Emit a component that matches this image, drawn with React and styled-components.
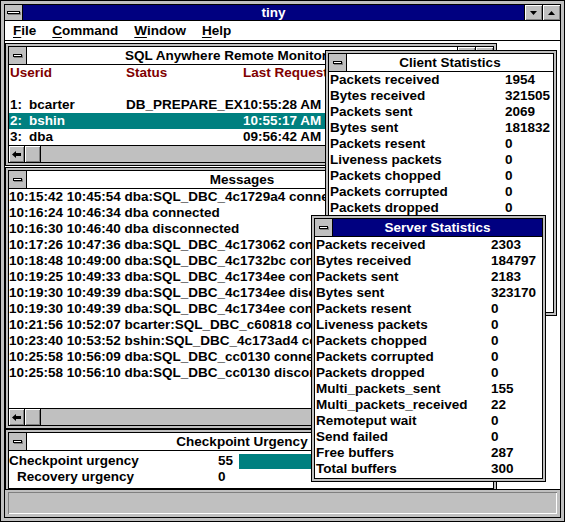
import React from 'react';
import styled, { createGlobalStyle } from 'styled-components';

const GlobalStyle = createGlobalStyle`
  html, body {
    margin: 0;
    padding: 0;
    background: #fff;
  }
  body {
    font-family: "Liberation Sans", Arial, sans-serif;
    font-weight: bold;
    font-size: 13.5px;
    color: #000;
  }
`;

const Frame = styled.div`
    width: 565px;
    height: 522px;
    box-sizing: border-box;
    border: 1px solid #000;
    background: #c0c0c0;
    padding: 3px;
`;
const Inner = styled.div`
    height: 100%;
    box-sizing: border-box;
    border: 1px solid #000;
    display: flex;
    flex-direction: column;
    background: #fff;
`;
const AppTitle = styled.div`
    height: 15px;
    border-bottom: 1px solid #000;
    background: #000080;
    color: #fff;
    display: flex;
    flex-shrink: 0;
`;
const SysBox = styled.div`
    width: 17px;
    border-right: 1px solid #000;
    background: #c0c0c0;
    display: flex;
    align-items: center;
    justify-content: center;
`;
const SysBar = styled.span`
    width: ${p => p.$wide ? 11 : 7}px;
    height: 1px;
    background: #fff;
    border: 1px solid #000;
    box-shadow: 1px 1px 0 #808080;
`;
const Caption = styled.div`
    flex: 1;
    text-align: center;
    line-height: ${p => p.$h || 15}px;
    padding-right: ${p => p.$shift || 0}px;
    white-space: nowrap;
    overflow: hidden;
`;
const SizeBtn = styled.div`
    width: 17px;
    border-left: 1px solid #000;
    background: #c0c0c0;
    box-shadow: inset 1px 1px #fff, inset -1px -1px #808080;
    display: flex;
    align-items: center;
    justify-content: center;
`;
const MenuBar = styled.div`
    height: 19px;
    border-bottom: 1px solid #000;
    display: flex;
    flex-shrink: 0;
    background: #fff;
`;
const MenuItem = styled.span`
    padding: 0 8px;
    line-height: 19px;
    u { text-decoration-thickness: 1px; text-underline-offset: 2px; }
`;
const Workspace = styled.div`
    flex: 1;
    position: relative;
    overflow: hidden;
    background: #fff;
`;
const StatusBar = styled.div`
    height: 22px;
    border-top: 1px solid #000;
    background: #c0c0c0;
    flex-shrink: 0;
    display: flex;
    padding: 2px 3px 3px 3px;
    box-sizing: content-box;
`;
const StatusField = styled.div`
    flex: 1;
    box-shadow: inset 1px 1px #808080, inset -1px -1px #fff;
`;

const Win = styled.div`
    position: absolute;
    left: ${p => p.$x}px;
    top: ${p => p.$y}px;
    width: ${p => p.$w}px;
    height: ${p => p.$h}px;
    box-sizing: border-box;
    border: 1px solid #000;
    padding: 2px;
    background: #c0c0c0;
    display: flex;
`;
const WinBody = styled.div`
    flex: 1;
    min-width: 0;
    border: 1px solid #000;
    background: #fff;
    display: flex;
    flex-direction: column;
    overflow: hidden;
`;
const WinTitle = styled.div`
    height: 17px;
    border-bottom: 1px solid #000;
    background: ${p => p.$active ? '#000080' : '#fff'};
    color: ${p => p.$active ? '#fff' : '#000'};
    display: flex;
    flex-shrink: 0;
`;
const Pane = styled.div`
    flex: 1;
    overflow: hidden;
    padding: ${p => p.$pad || '0'};
`;

const HScroll = styled.div`
    height: 16px;
    border-top: 1px solid #000;
    background: #c0c0c0;
    display: flex;
    flex-shrink: 0;
`;
const ScrollPart = styled.div`
    width: 15px;
    border-right: 1px solid #000;
    box-shadow: inset 1px 1px #fff, inset -1px -1px #808080;
    display: flex;
    align-items: center;
    justify-content: center;
`;

const UserGrid = styled.div`
    display: grid;
    grid-template-columns: 19px 97px 117px 1fr;
    height: 16px;
    line-height: 16px;
    padding-left: 1px;
    white-space: nowrap;
    background: ${p => p.$selected ? '#008080' : 'transparent'};
    color: ${p => p.$head ? '#800000' : p.$selected ? '#fff' : '#000'};
`;
const Cell = styled.span`
    overflow: hidden;
    grid-column: ${p => p.$span ? 'span 2' : 'auto'};
`;
const MsgLine = styled.div`
    height: 16px;
    line-height: 16px;
    white-space: nowrap;
`;
const StatRow = styled.div`
    display: grid;
    grid-template-columns: 175px 1fr;
    height: 16px;
    line-height: 16px;
    padding-left: 1px;
    white-space: nowrap;
`;
const UrgRow = styled.div`
    display: grid;
    grid-template-columns: 209px 21px 1fr;
    height: 16px;
    line-height: 16px;
    white-space: nowrap;
    align-items: center;
`;
const UrgLabel = styled.span`
    padding-left: ${p => p.$indent ? 8 : 0}px;
`;
const UrgBar = styled.span`
    height: 15px;
    background: #008080;
`;

const Tri = ({ up }) => (
    <svg width="7" height="4" viewBox="0 0 7 4">
        <polygon points={up ? '3.5,0 7,4 0,4' : '0,0 7,0 3.5,4'} fill="#000" />
    </svg>
);

const LeftArrow = () => (
    <svg width="9" height="7" viewBox="0 0 9 7">
        <path d="M0 3.5 L4 0 V2 H9 V5 H4 V7 Z" fill="#000" />
    </svg>
);

const ChildTitle = ({ title, active, buttons, shift }) => (
    <WinTitle $active={active}>
        <SysBox><SysBar /></SysBox>
        <Caption $h={17} $shift={shift}>{title}</Caption>
        {buttons && <><SizeBtn><Tri /></SizeBtn><SizeBtn><Tri up /></SizeBtn></>}
    </WinTitle>
);

const Scroller = () => (
    <HScroll>
        <ScrollPart><LeftArrow /></ScrollPart>
        <ScrollPart />
    </HScroll>
);

const users = [
    { n: '1:', id: 'bcarter', status: 'DB_PREPARE_EXECUTE', time: '10:55:28 AM' },
    { n: '2:', id: 'bshin', status: '', time: '10:55:17 AM', sel: true },
    { n: '3:', id: 'dba', status: '', time: '09:56:42 AM' },
];

const messages = [
    '10:15:42 10:45:54 dba:SQL_DBC_4c1729a4 connected',
    '10:16:24 10:46:34 dba connected',
    '10:16:30 10:46:40 dba disconnected',
    '10:17:26 10:47:36 dba:SQL_DBC_4c173062 connected',
    '10:18:48 10:49:00 dba:SQL_DBC_4c1732bc connected',
    '10:19:25 10:49:33 dba:SQL_DBC_4c1734ee connected',
    '10:19:30 10:49:39 dba:SQL_DBC_4c1734ee disconnected',
    '10:19:30 10:49:39 dba:SQL_DBC_4c1734ee connected',
    '10:21:56 10:52:07 bcarter:SQL_DBC_c60818 connected',
    '10:23:40 10:53:52 bshin:SQL_DBC_4c173ad4 connected',
    '10:25:58 10:56:09 dba:SQL_DBC_cc0130 connected',
    '10:25:58 10:56:10 dba:SQL_DBC_cc0130 disconnected',
];

const clientStats = [
    ['Packets received', '1954'],
    ['Bytes received', '321505'],
    ['Packets sent', '2069'],
    ['Bytes sent', '181832'],
    ['Packets resent', '0'],
    ['Liveness packets', '0'],
    ['Packets chopped', '0'],
    ['Packets corrupted', '0'],
    ['Packets dropped', '0'],
];

const serverStats = [
    ['Packets received', '2303'],
    ['Bytes received', '184797'],
    ['Packets sent', '2183'],
    ['Bytes sent', '323170'],
    ['Packets resent', '0'],
    ['Liveness packets', '0'],
    ['Packets chopped', '0'],
    ['Packets corrupted', '0'],
    ['Packets dropped', '0'],
    ['Multi_packets_sent', '155'],
    ['Multi_packets_received', '22'],
    ['Remoteput wait', '0'],
    ['Send failed', '0'],
    ['Free buffers', '287'],
    ['Total buffers', '300'],
];

const App = () => {
    const checkpoint = 55;

    return (
    <>
        <GlobalStyle />
        <Frame>
            <Inner>
                <AppTitle>
                    <SysBox><SysBar $wide /></SysBox>
                    <Caption>tiny</Caption>
                    <SizeBtn><Tri /></SizeBtn>
                    <SizeBtn><Tri up /></SizeBtn>
                </AppTitle>
                <MenuBar>
                    <MenuItem><u>F</u>ile</MenuItem>
                    <MenuItem><u>C</u>ommand</MenuItem>
                    <MenuItem><u>W</u>indow</MenuItem>
                    <MenuItem><u>H</u>elp</MenuItem>
                </MenuBar>
                <Workspace>
                    <Win $x={0} $y={2} $w={492} $h={123}>
                        <WinBody>
                            <ChildTitle title="SQL Anywhere Remote Monitor" shift={32} buttons />
                            <Pane>
                                <UserGrid $head>
                                    <Cell $span>Userid</Cell>
                                    <Cell>Status</Cell>
                                    <Cell>Last Request</Cell>
                                </UserGrid>
                                <UserGrid />
                                {users.map(u => (
                                    <UserGrid key={u.n} $selected={u.sel}>
                                        <Cell>{u.n}</Cell>
                                        <Cell>{u.id}</Cell>
                                        <Cell>{u.status}</Cell>
                                        <Cell>{u.time}</Cell>
                                    </UserGrid>
                                ))}
                            </Pane>
                            <Scroller />
                        </WinBody>
                    </Win>

                    <Win $x={0} $y={126} $w={492} $h={262}>
                        <WinBody>
                            <ChildTitle title="Messages" buttons />
                            <Pane>
                                {messages.map((m, i) => <MsgLine key={i}>{m}</MsgLine>)}
                            </Pane>
                            <Scroller />
                        </WinBody>
                    </Win>

                    <Win $x={0} $y={388} $w={492} $h={63}>
                        <WinBody>
                            <ChildTitle title="Checkpoint Urgency" buttons />
                            <Pane $pad="2px 0 0 0">
                                <UrgRow>
                                    <UrgLabel>Checkpoint urgency</UrgLabel>
                                    <span>{checkpoint}</span>
                                    <UrgBar style={{ width: checkpoint * 2 }} />
                                </UrgRow>
                                <UrgRow>
                                    <UrgLabel $indent>Recovery urgency</UrgLabel>
                                    <span>0</span>
                                </UrgRow>
                            </Pane>
                        </WinBody>
                    </Win>

                    <Win $x={320} $y={9} $w={232} $h={266}>
                        <WinBody>
                            <ChildTitle title="Client Statistics" />
                            <Pane>
                                {clientStats.map(([k, v]) => (
                                    <StatRow key={k}><span>{k}</span><span>{v}</span></StatRow>
                                ))}
                            </Pane>
                        </WinBody>
                    </Win>

                    <Win $x={306} $y={174} $w={235} $h={267}>
                        <WinBody>
                            <ChildTitle title="Server Statistics" active />
                            <Pane>
                                {serverStats.map(([k, v]) => (
                                    <StatRow key={k}><span>{k}</span><span>{v}</span></StatRow>
                                ))}
                            </Pane>
                        </WinBody>
                    </Win>
                </Workspace>
                <StatusBar>
                    <StatusField />
                </StatusBar>
            </Inner>
        </Frame>
    </>
  );
};

export default App;
